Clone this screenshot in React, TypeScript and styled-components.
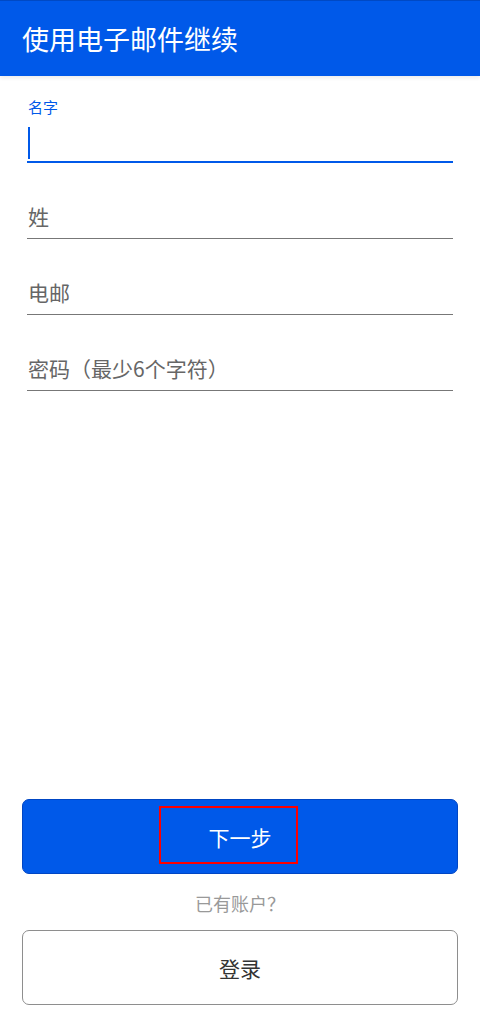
import React from 'react'
import styled, { createGlobalStyle } from 'styled-components'

const Global = createGlobalStyle`
  html, body {
    margin: 0;
    padding: 0;
    height: 100%;
    background: #fff;
  }
  body {
    font-family: "Noto Sans CJK SC", "Noto Sans", sans-serif;
  }
  #root {
    min-height: 100%;
  }
`

const BLUE = '#0059e9'

const Page = styled.div`
  min-height: 100vh;
  display: flex;
  flex-direction: column;
`

const Header = styled.header`
  height: 76px;
  box-sizing: border-box;
  background: ${BLUE};
  border-top: 1px solid #0049c4;
  display: flex;
  align-items: center;
  padding-left: 22px;
  box-shadow: 0 2px 4px rgba(0, 0, 0, 0.08);
`

const Title = styled.h1`
  margin: 0;
  font-size: 27px;
  font-weight: 400;
  color: #fff;
`

const Form = styled.div`
  display: flex;
  flex-direction: column;
  gap: 31px;
  padding: 20px 27px 0;
`

const Field = styled.div`
  display: flex;
  flex-direction: column;
`

const Label = styled.label`
  font-size: 15px;
  line-height: 21px;
  color: ${BLUE};
  padding-left: 1px;
`

const InputBox = styled.div<{ $focused?: boolean }>`
  height: ${p => (p.$focused ? '46px' : '45px')};
  box-sizing: border-box;
  display: flex;
  align-items: ${p => (p.$focused ? 'flex-end' : 'center')};
  padding-bottom: ${p => (p.$focused ? '2px' : '0')};
  border-bottom: ${p => (p.$focused ? `2px solid ${BLUE}` : '1px solid #777')};
`

const Caret = styled.span`
  display: block;
  width: 2px;
  height: 32px;
  margin-left: 1px;
  background: ${BLUE};
`

const Placeholder = styled.span`
  font-size: 21px;
  line-height: 30px;
  color: #666;
  padding-left: 1px;
`

const Actions = styled.div`
  margin-top: auto;
  padding: 0 22px 26px;
  display: flex;
  flex-direction: column;
`

const Button = styled.button<{ $primary?: boolean }>`
  position: relative;
  height: 75px;
  width: 100%;
  box-sizing: border-box;
  border-radius: 7px;
  font-family: inherit;
  font-size: 21px;
  cursor: pointer;
  background: ${p => (p.$primary ? BLUE : '#fff')};
  color: ${p => (p.$primary ? '#fff' : '#333')};
  border: ${p => (p.$primary ? '1px solid #0046c4' : '1.5px solid #8e8e8e')};
`

const Highlight = styled.span`
  position: absolute;
  left: 136px;
  top: 6px;
  width: 139px;
  height: 58px;
  box-sizing: border-box;
  border: 2px solid #ff0000;
  pointer-events: none;
`

const Hint = styled.div`
  margin: 17px 0 15px;
  text-align: center;
  font-size: 18px;
  line-height: 24px;
  color: #999;
`

export default function App() {
  return (
    <Page>
      <Global />
      <Header>
        <Title>使用电子邮件继续</Title>
      </Header>
      <Form>
        <Field>
          <Label>名字</Label>
          <InputBox $focused>
            <Caret />
          </InputBox>
        </Field>
        <Field>
          <InputBox>
            <Placeholder>姓</Placeholder>
          </InputBox>
        </Field>
        <Field>
          <InputBox>
            <Placeholder>电邮</Placeholder>
          </InputBox>
        </Field>
        <Field>
          <InputBox>
            <Placeholder>密码（最少6个字符）</Placeholder>
          </InputBox>
        </Field>
      </Form>
      <Actions>
        <Button $primary>
          下一步
          <Highlight />
        </Button>
        <Hint>已有账户？</Hint>
        <Button>登录</Button>
      </Actions>
    </Page>
  )
}
